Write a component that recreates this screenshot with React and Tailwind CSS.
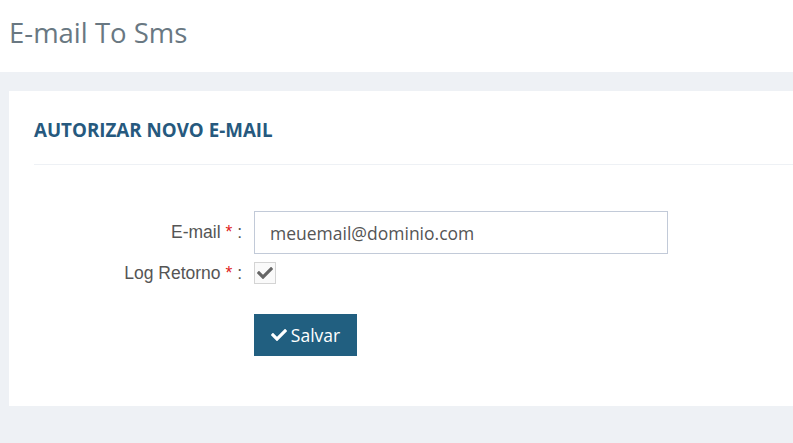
import { FaCheck } from "react-icons/fa";

export default function App() {
  return (
    <div className="w-[793px] h-[443px] overflow-hidden bg-[#eef1f5] font-['Open_Sans',sans-serif]">
      <div className="h-[72px] bg-white pl-[9px] pt-[14px]">
        <h1 className="text-[27.5px] leading-[38px] text-[#697882]">E-mail To Sms</h1>
      </div>

      <div className="ml-[9px] mt-[19px] h-[315px] bg-white pl-[25px]">
        <div className="h-[74px] border-b border-[#eef1f5] pt-[26px]">
          <h2 className="text-[18.75px] leading-[26px] font-bold text-[#26597e]">AUTORIZAR NOVO E-MAIL</h2>
        </div>

        <form className="pt-[46px]">
          <div className="flex items-center">
            <label className="w-[220px] shrink-0 text-right pr-[12px] font-['Liberation_Sans',sans-serif] text-[17.5px] text-[#555]">
              E-mail <span className="text-[#e02222]">*</span> :
            </label>
            <input
              type="text"
              defaultValue="meuemail@dominio.com"
              className="w-[414px] h-[43px] border border-[#c2cad8] px-[15px] text-[17.5px] text-[#555] outline-none"
            />
          </div>

          <div className="flex items-center mt-[6px]">
            <label className="w-[220px] shrink-0 text-right pr-[12px] font-['Liberation_Sans',sans-serif] text-[17.5px] text-[#555]">
              Log Retorno <span className="text-[#e02222]">*</span> :
            </label>
            <span className="w-[22px] h-[22px] border border-[#d4d4d4] bg-[#fafafa] flex items-center justify-center">
              <FaCheck className="w-[16px] h-[16px] text-[#666]" />
            </span>
          </div>

          <div className="ml-[220px] mt-[28px]">
            <button
              type="button"
              className="w-[103px] h-[42px] bg-[#215f80] text-white text-[17.5px] flex items-center justify-center gap-[4px]"
            >
              <FaCheck className="w-[16px] h-[16px]" />
              Salvar
            </button>
          </div>
        </form>
      </div>
    </div>
  );
}
